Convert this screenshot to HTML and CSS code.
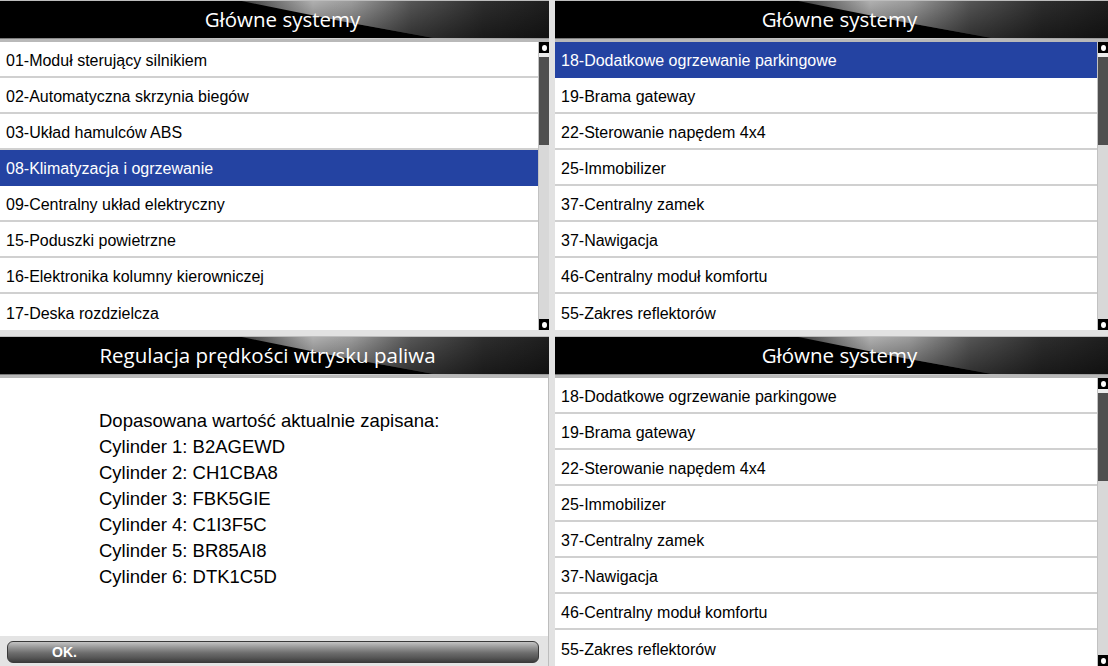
FILE: index.html
```html
<!DOCTYPE html>
<html lang="pl">
<head>
<meta charset="utf-8">
<title>Główne systemy</title>
<link rel="stylesheet" href="styles.css">
</head>
<body>
<div class="screen">
  <section class="panel">
    <div class="header"><span class="title">Główne systemy</span></div>
    <div class="list-wrap">
      <ul class="list">
        <li class="row">01-Moduł sterujący silnikiem</li>
        <li class="row">02-Automatyczna skrzynia biegów</li>
        <li class="row">03-Układ hamulców ABS</li>
        <li class="row selected">08-Klimatyzacja i ogrzewanie</li>
        <li class="row">09-Centralny układ elektryczny</li>
        <li class="row">15-Poduszki powietrzne</li>
        <li class="row">16-Elektronika kolumny kierowniczej</li>
        <li class="row">17-Deska rozdzielcza</li>
      </ul>
      <div class="scrollbar">
        <div class="sb-btn"><span class="sb-dot"></span></div>
        <div class="sb-gap"></div>
        <div class="sb-thumb"></div>
        <div class="sb-track"></div>
        <div class="sb-btn"><span class="sb-dot"></span></div>
      </div>
    </div>
  </section>

  <section class="panel">
    <div class="header"><span class="title">Główne systemy</span></div>
    <div class="list-wrap">
      <ul class="list">
        <li class="row selected">18-Dodatkowe ogrzewanie parkingowe</li>
        <li class="row">19-Brama gateway</li>
        <li class="row">22-Sterowanie napędem 4x4</li>
        <li class="row">25-Immobilizer</li>
        <li class="row">37-Centralny zamek</li>
        <li class="row">37-Nawigacja</li>
        <li class="row">46-Centralny moduł komfortu</li>
        <li class="row">55-Zakres reflektorów</li>
      </ul>
      <div class="scrollbar">
        <div class="sb-btn"><span class="sb-dot"></span></div>
        <div class="sb-gap"></div>
        <div class="sb-thumb"></div>
        <div class="sb-track"></div>
        <div class="sb-btn"><span class="sb-dot"></span></div>
      </div>
    </div>
  </section>

  <section class="panel">
    <div class="header header-info"><span class="title">Regulacja prędkości wtrysku paliwa</span></div>
    <div class="info">
      <div class="info-text">
        <p class="line">Dopasowana wartość aktualnie zapisana:</p>
        <p class="line">Cylinder 1: B2AGEWD</p>
        <p class="line">Cylinder 2: CH1CBA8</p>
        <p class="line">Cylinder 3: FBK5GIE</p>
        <p class="line">Cylinder 4: C1I3F5C</p>
        <p class="line">Cylinder 5: BR85AI8</p>
        <p class="line">Cylinder 6: DTK1C5D</p>
      </div>
      <div class="button-bar">
        <button class="ok-btn">OK.</button>
      </div>
    </div>
  </section>

  <section class="panel">
    <div class="header"><span class="title">Główne systemy</span></div>
    <div class="list-wrap">
      <ul class="list">
        <li class="row">18-Dodatkowe ogrzewanie parkingowe</li>
        <li class="row">19-Brama gateway</li>
        <li class="row">22-Sterowanie napędem 4x4</li>
        <li class="row">25-Immobilizer</li>
        <li class="row">37-Centralny zamek</li>
        <li class="row">37-Nawigacja</li>
        <li class="row">46-Centralny moduł komfortu</li>
        <li class="row">55-Zakres reflektorów</li>
      </ul>
      <div class="scrollbar">
        <div class="sb-btn"><span class="sb-dot"></span></div>
        <div class="sb-gap"></div>
        <div class="sb-thumb"></div>
        <div class="sb-track"></div>
        <div class="sb-btn"><span class="sb-dot"></span></div>
      </div>
    </div>
  </section>
</div>
</body>
</html>
```

FILE: styles.css
```css
* { box-sizing: border-box; }

html, body {
  margin: 0;
  padding: 0;
  background: #e2e2e2;
}

body {
  width: 1108px;
  height: 666px;
  overflow: hidden;
  font-family: "Liberation Sans", Arial, sans-serif;
}

.screen {
  display: grid;
  grid-template-columns: 549px 553px;
  grid-template-rows: 330px 330px;
  column-gap: 6px;
  row-gap: 6px;
  width: 1108px;
  height: 666px;
}

.panel {
  display: flex;
  flex-direction: column;
  background: #ffffff;
  overflow: hidden;
}

.header {
  position: relative;
  flex: 0 0 42px;
  display: flex;
  align-items: center;
  justify-content: center;
  padding: 0 0 1px 16px;
  background: #000;
  border-top: 1px solid #bdbdbd;
  border-bottom: 3px solid #b9b9b9;
  overflow: hidden;
}

.header-info {
  padding-left: 0;
  padding-right: 14px;
}

.header::before {
  content: "";
  position: absolute;
  inset: 0;
  clip-path: polygon(44% 0, 100% 0, 100% 100%, 80% 100%, 63% 55%);
  background:
    linear-gradient(to bottom, rgba(0,0,0,0) 0%, rgba(0,0,0,0.45) 100%),
    linear-gradient(to right, #3a3a3a 44%, #b0b0b0 57%, #9c9c9c 64%, #555 75%, #2e2e2e 88%, #1e1e1e 100%);
}

.header::after {
  content: "";
  position: absolute;
  left: 0;
  right: 0;
  bottom: 0;
  height: 1px;
  background: linear-gradient(to right, #777 0%, #ddd 55%, #999 100%);
}

.title {
  position: relative;
  z-index: 1;
  color: #ffffff;
  font-family: "Open Sans", "DejaVu Sans", sans-serif;
  font-size: 20.5px;
  line-height: 1;
}

.list-wrap {
  flex: 1 1 auto;
  display: flex;
  min-height: 0;
}

.list {
  flex: 1 1 auto;
  margin: 0;
  padding: 0;
  list-style: none;
}

.row {
  height: 36px;
  display: flex;
  align-items: center;
  padding: 3px 0 0 6px;
  font-size: 16px;
  color: #000;
  border-bottom: 2px solid #d0d0d0;
  background: #ffffff;
}

.row:last-child {
  border-bottom: 0;
}

.row.selected {
  background: #2443a2;
  color: #ffffff;
  border-bottom-color: #2443a2;
}

.scrollbar {
  flex: 0 0 11px;
  display: flex;
  flex-direction: column;
  background: #d9d9d9;
  border-left: 1px solid #c2c2c2;
}

.sb-btn {
  flex: 0 0 11px;
  display: flex;
  align-items: center;
  justify-content: center;
  background: #000;
}

.sb-dot {
  width: 5px;
  height: 6px;
  border-radius: 50%;
  background: #ffffff;
}

.sb-gap {
  flex: 0 0 4px;
  background: #ececec;
}

.sb-thumb {
  flex: 0 0 88px;
  background: #4f4f4f;
}

.sb-track {
  flex: 1 1 auto;
  background: #d8d8d8;
}

.info {
  flex: 1 1 auto;
  display: flex;
  flex-direction: column;
  border-right: 1px solid #bdbdbd;
}

.info-text {
  flex: 1 1 auto;
  padding: 30px 0 0 99px;
}

.line {
  margin: 0;
  font-size: 18.5px;
  line-height: 26px;
  color: #000;
}

.button-bar {
  flex: 0 0 30px;
  display: flex;
  align-items: center;
  padding: 2px 9px 0 7px;
  background: #e4e4e4;
}

.ok-btn {
  width: 100%;
  height: 22px;
  display: flex;
  align-items: center;
  padding: 0 0 0 44px;
  border: 1px solid #3a3a3a;
  border-radius: 6px;
  background: linear-gradient(to bottom, #c4c4c4 0%, #9a9a9a 25%, #6d6d6d 55%, #555 80%, #3c3c3c 100%);
  color: #ffffff;
  font-family: "Liberation Sans", Arial, sans-serif;
  font-weight: bold;
  font-size: 14px;
  text-align: left;
}
```
